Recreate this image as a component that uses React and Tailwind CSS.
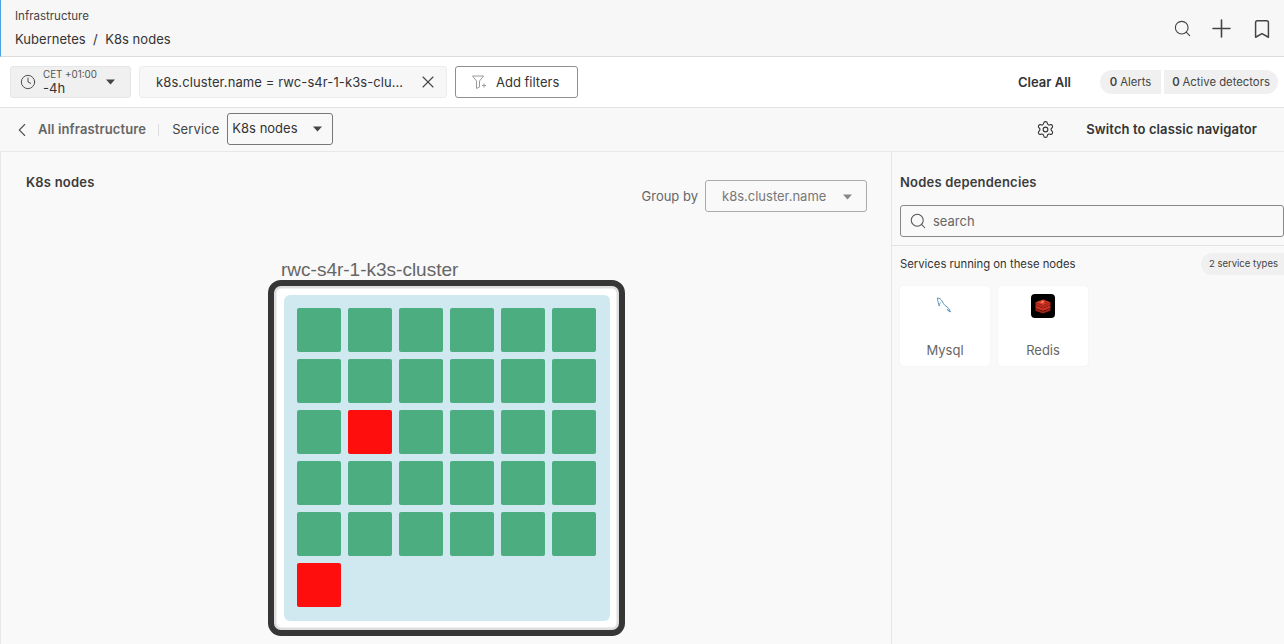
import React from "react";
import { Search, Plus, Bookmark, Clock, X, ChevronLeft, Settings } from "lucide-react";

const Caret = ({ className = "" }) => (
  <svg width="9" height="6" viewBox="0 0 9 6" className={className}><path d="M0 .5h9L4.500 5.500z" fill="currentColor" /></svg>
);

const rows = [
  ["g","g","g","g","g","g"],
  ["g","g","g","g","g","g"],
  ["g","r","g","g","g","g"],
  ["g","g","g","g","g","g"],
  ["g","g","g","g","g","g"],
  ["r"],
];

const Mysql = () => (
  <svg width="20" height="20" viewBox="0 0 20 20" fill="none" stroke="#5f94ba" strokeWidth="1" strokeLinecap="round" strokeLinejoin="round">
    <path d="M2.500 2.200C4.500 1.800 6 3.200 7 5c.8 1.600 1.700 3.300 3 4.500 1.300 1 3 1.800 3.900 3.200.5.900 1 2 1.600 3.100-1.200-.6-2.100-1.800-3.300-2.500" />
    <path d="M2.500 2.200c-.2 1.600.5 3 .8 4.400.2 1.200.3 2.300.9 3.400.4-1 .2-2.300.9-3.100" />
    <path d="M12.500 14c.6.800 1.400 1.200 2.400 1.500" />
  </svg>
);

const Redis = () => (
  <div className="w-6 h-6 rounded-[4px] bg-black flex items-center justify-center">
    <svg width="18" height="15" viewBox="0 0 20 18">
      <path d="M1 11.500 10 15l9-3.500V14l-9 3.500L1 14z" fill="#a32418" />
      <path d="M1 7.500 10 11l9-3.500V11l-9 3.500L1 11z" fill="#c9301f" />
      <path d="M1 4 10 7.500 19 4v3.500L10 11 1 7.500z" fill="#b52a1b" />
      <path d="M10 .5 19 4l-9 3.500L1 4z" fill="#dc3a28" />
      <path d="M7.500 3.500l2.500-.8 1 1-2.500.8z" fill="#f6d9d4" />
      <circle cx="13.500" cy="4" r="1" fill="#7a1a10" />
    </svg>
  </div>
);

export default function App() {
  return (
    <div className="w-[1284px] h-[644px] overflow-hidden bg-[#f9f9f9] text-[#3c3c3c] font-['Inter','Liberation_Sans',sans-serif] flex flex-col">
      {/* Header */}
      <header className="h-[57px] shrink-0 bg-[#f7f7f7] border-b border-[#dcdcdc] border-l border-l-[#4aa3df] flex items-start justify-between pl-[14px] pr-[11px]">
        <div className="flex flex-col">
          <span className="text-[11.500px] leading-[14px] mt-[9px] text-[#444]">Infrastructure</span>
          <span className="text-[13px] leading-[18px] mt-[7px] text-[#333] whitespace-pre tracking-[0.03px]">Kubernetes  /  K8s nodes</span>
        </div>
        <div className="flex items-center gap-[15px] mt-[14px] text-[#444]">
          <Search size={19} strokeWidth={1.4} />
          <Plus size={29} strokeWidth={1.3} />
          <Bookmark size={22} strokeWidth={1.6} />
        </div>
      </header>

      {/* Filter bar */}
      <div className="h-[51px] shrink-0 bg-white border-b border-[#e2e2e2] flex items-center pl-[10px] pr-[6px]">
        <div className="w-[121px] h-[32px] bg-[#f0f0f0] border border-[#e6e6e6] rounded-[3px] flex items-center pl-[9px]">
          <Clock size={16} strokeWidth={1.4} className="text-[#444]" />
          <div className="flex flex-col ml-[7px] w-[63px] pt-[1px]">
            <span className="text-[9.800px] leading-[11px] text-[#555]">CET +01:00</span>
            <span className="text-[13px] leading-[16px] text-[#333]">-4h</span>
          </div>
          <Caret className="text-[#444]" />
        </div>
        <div className="ml-[8px] w-[308px] h-[32px] bg-[#f7f7f7] border border-[#ececec] rounded-[3px] flex items-center pl-[16px] pr-[8px] justify-between">
          <span className="text-[13px] text-[#333] whitespace-nowrap pt-[1px] tracking-[0.1px]">k8s.cluster.name = rwc-s4r-1-k3s-clu…</span>
          <X size={20} strokeWidth={1.3} className="text-[#444]" />
        </div>
        <button className="ml-[8px] w-[123px] h-[32px] border border-[#8f8f8f] rounded-[3px] flex items-center pl-[16px] gap-[8px] text-[13px] text-[#333] bg-white">
          <svg width="16" height="14" viewBox="0 0 16 14" fill="none" stroke="#9a9a9a" strokeWidth="1"><path d="M.5 1h11L7.500 6v6L4.500 13.500V6z" /><path d="M12 8.500v4M10 10.500h4" /></svg>
          <span className="pt-[1px]">Add filters</span>
        </button>
        <span className="ml-auto text-[13px] font-semibold text-[#333] pt-[1px]">Clear All</span>
        <div className="ml-[29px] flex gap-[3px] text-[11.300px] text-[#444]">
          <span className="h-6 w-[61px] flex items-center justify-center rounded-l-full bg-[#f0f0f0]"><b className="font-semibold mr-[3px]">0</b>Alerts</span>
          <span className="h-6 w-[114px] flex items-center justify-center rounded-r-full bg-[#f0f0f0]"><b className="font-semibold mr-[3px]">0</b>Active detectors</span>
        </div>
      </div>

      {/* Sub nav */}
      <div className="h-[44px] shrink-0 bg-[#f8f8f8] border-b border-[#e8e8e8] flex items-center pl-[11px] pr-[27px]">
        <ChevronLeft size={22} strokeWidth={1.2} className="text-[#555]" />
        <span className="ml-[5px] text-[13px] font-semibold text-[#666] tracking-[0.12px]">All infrastructure</span>
        <span className="ml-[12px] w-px h-3 bg-[#ddd]" />
        <span className="ml-[13px] text-[13px] text-[#444] tracking-[0.1px]">Service</span>
        <div className="ml-[8px] mb-[2px] w-[106px] h-[32px] border border-[#777] rounded-[3px] flex items-center justify-between pl-1 pr-[10px] text-[13px] text-[#333]">
          K8s nodes
          <Caret className="text-[#444]" />
        </div>
        <Settings size={19} strokeWidth={1.4} className="ml-auto text-[#333]" />
        <span className="ml-[31px] text-[13px] font-semibold text-[#333] tracking-[0.1px]">Switch to classic navigator</span>
      </div>

      {/* Main */}
      <div className="flex flex-1 min-h-0 border-l border-[#e8e8e8]">
        <section className="w-[891px] shrink-0 border-r border-[#e6e6e6] pl-[25px] flex flex-col">
          <div className="flex justify-between pr-[24px]">
            <span className="text-[13px] font-semibold text-[#3a3a3a] mt-[22px] leading-[16px] tracking-[0.2px]">K8s nodes</span>
            <div className="flex items-center mt-[28px]">
              <span className="text-[13px] text-[#666] pt-[1px]">Group by</span>
              <div className="ml-[7px] w-[162px] h-[32px] border border-[#aaa] rounded-[3px] flex items-center justify-between pl-4 pr-[14px] pt-[1px] text-[13px] text-[#777]">
                k8s.cluster.name
                <Caret className="text-[#888]" />
              </div>
            </div>
          </div>
          <div className="ml-[255px] mt-[49px] text-[19px] leading-[18px] text-[#666] font-['Liberation_Sans',sans-serif]">rwc-s4r-1-k3s-cluster</div>
          <div className="ml-[242px] mt-[1px] w-[357px] h-[356px] border-[6px] border-[#363636] rounded-[13px] bg-white shadow-[inset_0_0_0_2.500px_#dedede] pl-[10px] pt-[9px]">
            <div className="w-[326px] h-[326px] rounded-[6px] bg-[#d0e9f1] pl-[13px] pt-[13px] flex flex-col gap-[7px]">
              {rows.map((row, i) => (
                <div key={i} className="flex gap-[7px]">
                  {row.map((c, j) => (
                    <div key={j} className={c === "r" ? "w-[44px] h-[44px] rounded-[2px] bg-[#ff0e0e]" : "w-[44px] h-[44px] rounded-[2px] bg-[#4cad80]"} />
                  ))}
                </div>
              ))}
            </div>
          </div>
        </section>

        <aside className="flex-1 min-w-0">
          <div className="pl-2 pb-2 border-b border-[#e2e2e2]">
            <div className="text-[13px] font-semibold text-[#3c3c3c] mt-[22px] leading-[16px] tracking-[0.2px]">Nodes dependencies</div>
            <div className="mt-[15px] h-[32px] border border-[#888] rounded-[3px] flex items-center pl-2 gap-[6px] text-[13px] text-[#666]">
              <Search size={18} strokeWidth={1.4} className="text-[#555]" />
              <span className="pt-[1px]">search</span>
            </div>
          </div>
          <div className="flex items-center justify-between pl-2 mt-[7px]">
            <span className="text-[11.300px] text-[#333]">Services running on these nodes</span>
            <span className="h-[22px] flex items-center pl-2 pr-[6px] rounded-l-full bg-[#f0f0f0] text-[9.500px] text-[#444]">2 service types</span>
          </div>
          <div className="flex gap-2 pl-2 mt-[11px]">
            <div className="w-[90px] h-[80px] bg-white rounded-[4px] shadow-[0_0_2px_rgba(0,0,0,0.06)] flex flex-col items-center text-[13px] text-[#666]">
              <div className="h-6 mt-[8px] flex items-center justify-center"><Mysql /></div>
              <span className="mt-[23px] leading-[18px]">Mysql</span>
            </div>
            <div className="w-[90px] h-[80px] bg-white rounded-[4px] shadow-[0_0_2px_rgba(0,0,0,0.06)] flex flex-col items-center text-[13px] text-[#666]">
              <div className="mt-[8px]"><Redis /></div>
              <span className="mt-[23px] leading-[18px]">Redis</span>
            </div>
          </div>
        </aside>
      </div>
    </div>
  );
}
